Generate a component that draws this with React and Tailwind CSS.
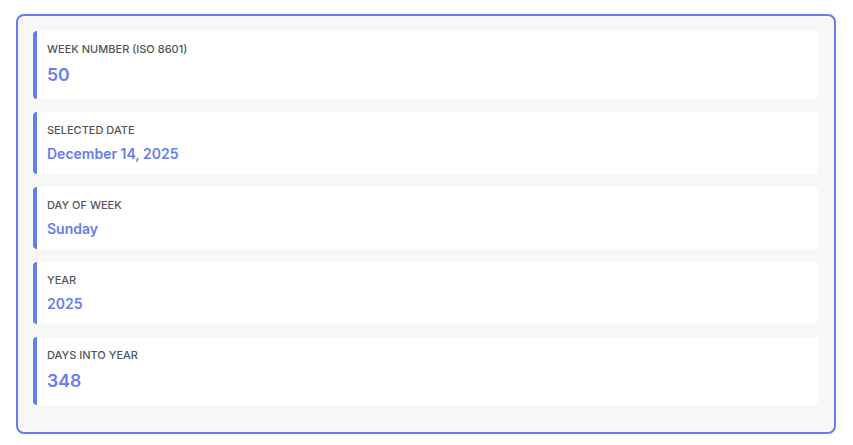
import React from "react";

const items = [
  { label: "Week Number (ISO 8601)", value: "50", big: true },
  { label: "Selected Date", value: "December 14, 2025" },
  { label: "Day of Week", value: "Sunday" },
  { label: "Year", value: "2025" },
  { label: "Days into Year", value: "348", big: true },
];

export default function App() {
  return (
    <div className="bg-white w-[853px] h-[445px] pt-[14px] pl-[16px]" style={{ fontFamily: "Inter, 'Noto Sans', sans-serif" }}>
      <div className="w-[820px] h-[420px] border-2 border-[#667eea] rounded-[8px] bg-[#f8f8f8] pt-[15px] pb-[14px] pl-[15px] pr-[16px]">
        {items.map((it) => (
          <div key={it.label} className={it.big ? "h-[68px] bg-white border-l-4 border-[#667eea] rounded-[4px] pl-[10px] pt-[12px] mb-[13px]" : "h-[62px] bg-white border-l-4 border-[#667eea] rounded-[4px] pl-[10px] pt-[12px] mb-[13px]"}>
            <div className="text-[11px] leading-[13px] font-medium uppercase text-[#555555] mb-[6px]">{it.label}</div>
            <div className={it.big ? "text-[17.6px] leading-[25px] font-semibold text-[#667eea]" : "text-[14px] leading-[19px] pt-[1px] font-semibold text-[#667eea]"}>{it.value}</div>
          </div>
        ))}
      </div>
    </div>
  );
}
